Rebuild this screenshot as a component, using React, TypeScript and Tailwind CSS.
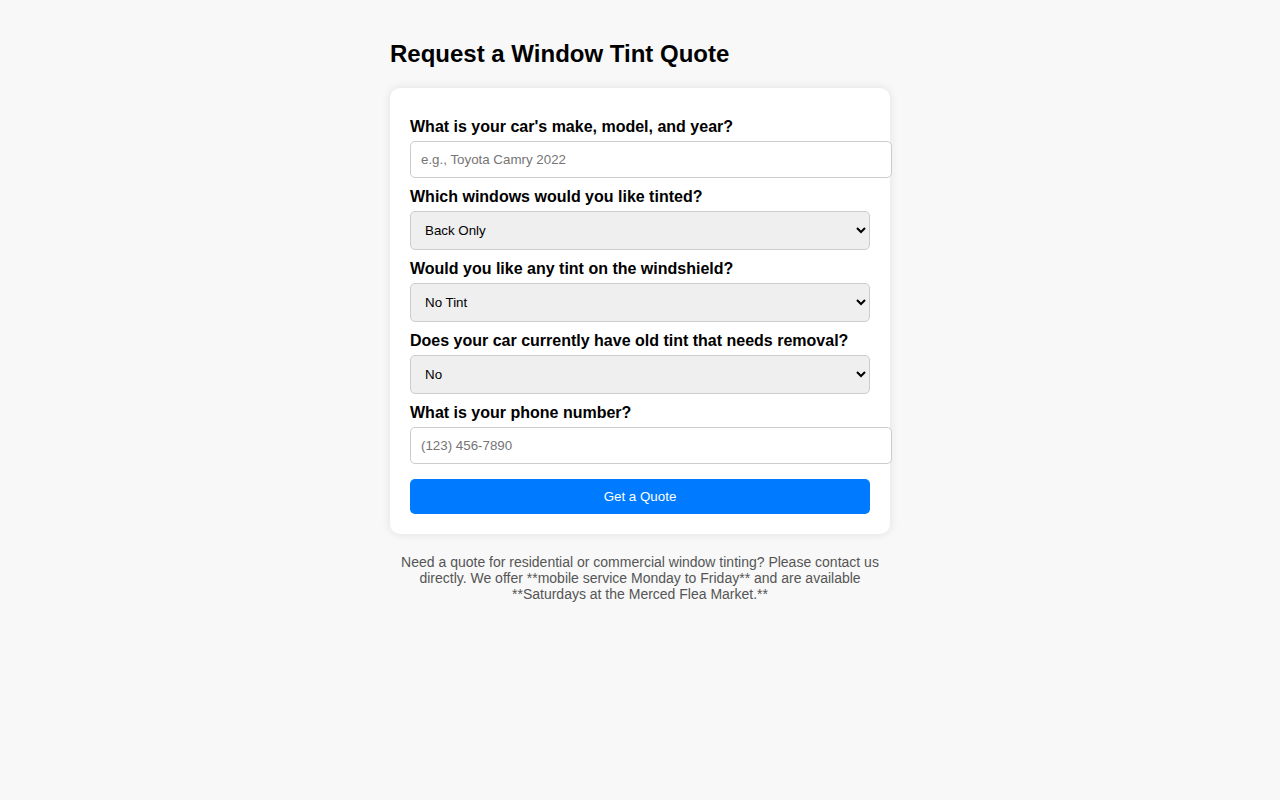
import { useState } from 'react';

const labelClasses = 'block mt-[10px] mb-[5px] text-[16px] leading-[18px] font-bold text-black';
const inputClasses =
    'box-content block w-full h-[15px] px-[10px] py-[10px] border border-[#cccccc] rounded-[5px] bg-white text-[13.333px] leading-[15px] text-black placeholder:text-[#757575] focus:outline-none';
const selectClasses =
    'block w-full h-[39px] px-[10px] border border-[#cccccc] rounded-[5px] bg-[#efefef] text-[13.333px] text-black';

export default function App() {
    const [car, setCar] = useState('');
    const [windows, setWindows] = useState('Back Only');
    const [windshield, setWindshield] = useState('No Tint');
    const [removal, setRemoval] = useState('No');
    const [phone, setPhone] = useState('');

    return (
        <div
            className="min-h-screen bg-[#f8f8f8] pt-[40px]"
            style={{ fontFamily: '"Liberation Sans", Arial, sans-serif' }}
        >
            <div className="w-[500px] mx-auto">
                <h1 className="text-[24px] leading-[28px] font-bold text-black mb-[20px]">
                    Request a Window Tint Quote
                </h1>

                <form
                    className="bg-white rounded-[10px] p-[20px] shadow-[0_0_10px_rgba(0,0,0,0.1)]"
                    onSubmit={(e) => e.preventDefault()}
                >
                    <label className={labelClasses}>What is your car's make, model, and year?</label>
                    <input
                        type="text"
                        value={car}
                        onChange={(e) => setCar(e.target.value)}
                        placeholder="e.g., Toyota Camry 2022"
                        className={inputClasses}
                    />

                    <label className={labelClasses}>Which windows would you like tinted?</label>
                    <select value={windows} onChange={(e) => setWindows(e.target.value)} className={selectClasses}>
                        <option>Front Only</option>
                        <option>Back Only</option>
                        <option>Full Car</option>
                    </select>

                    <label className={labelClasses}>Would you like any tint on the windshield?</label>
                    <select value={windshield} onChange={(e) => setWindshield(e.target.value)} className={selectClasses}>
                        <option>No Tint</option>
                        <option>Visor Strip</option>
                        <option>Full Windshield</option>
                    </select>

                    <label className={labelClasses}>Does your car currently have old tint that needs removal?</label>
                    <select value={removal} onChange={(e) => setRemoval(e.target.value)} className={selectClasses}>
                        <option>No</option>
                        <option>Yes</option>
                    </select>

                    <label className={labelClasses}>What is your phone number?</label>
                    <input
                        type="tel"
                        value={phone}
                        onChange={(e) => setPhone(e.target.value)}
                        placeholder="(123) 456-7890"
                        className={inputClasses}
                    />

                    <button
                        type="submit"
                        className="block w-full h-[35px] mt-[15px] rounded-[5px] bg-[#007bff] text-white text-[13.333px] cursor-pointer"
                    >
                        Get a Quote
                    </button>
                </form>

                <p className="mt-[20px] text-center text-[14px] leading-[16px] text-[#555555]">
                    Need a quote for residential or commercial window tinting? Please contact us directly. We offer
                    **mobile service Monday to Friday** and are available **Saturdays at the Merced Flea Market.**
                </p>
            </div>
        </div>
    );
}
